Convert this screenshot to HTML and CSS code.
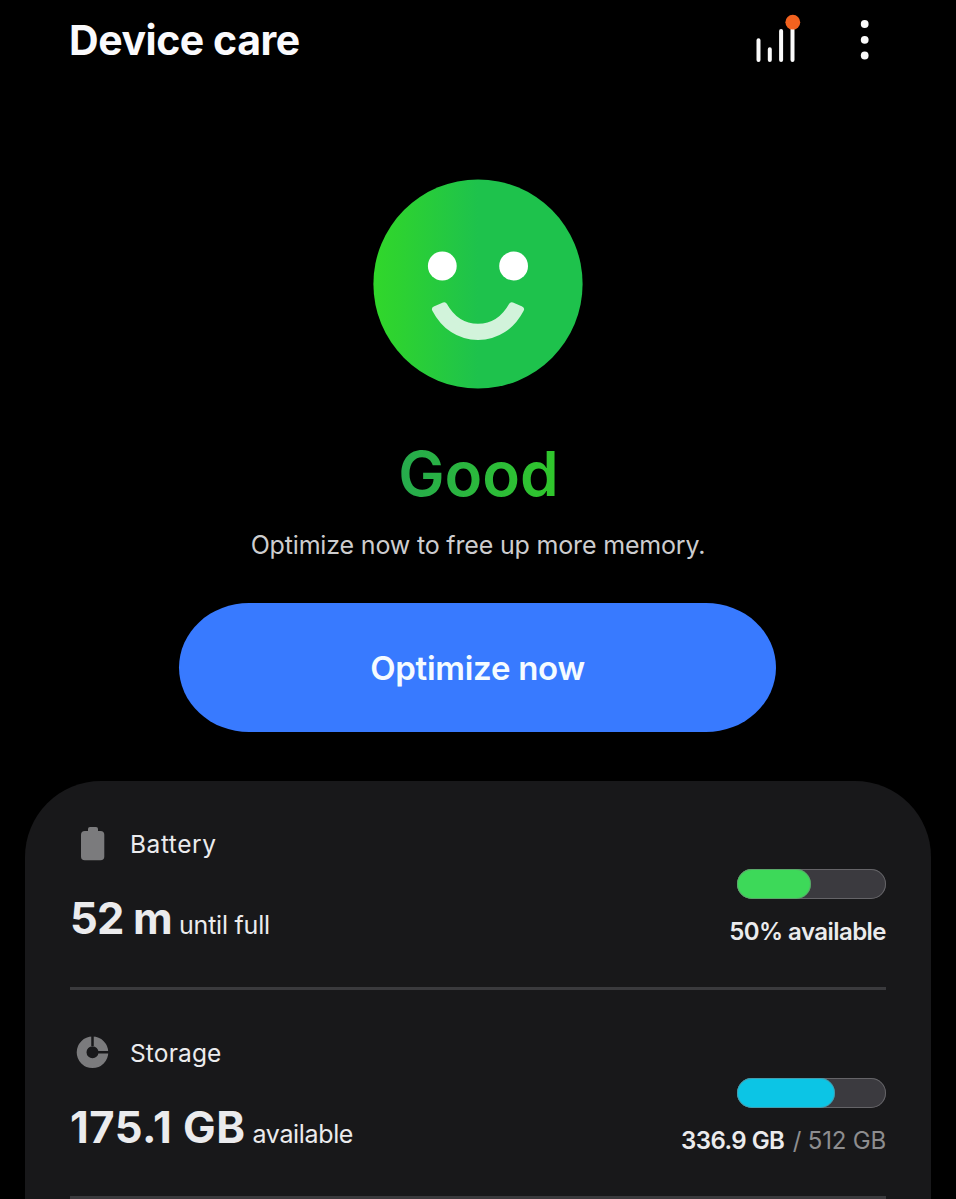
FILE: index.html
```html
<!DOCTYPE html>
<html lang="en">
<head>
<meta charset="utf-8">
<title>Device care</title>
<link rel="stylesheet" href="styles.css">
</head>
<body>
<header class="topbar">
  <h1 class="title"><span class="t-title">Device care</span></h1>
  <div class="actions">
    <svg class="icon-signal" width="52" height="56" viewBox="750 10 52 56" fill="none" stroke="#fafafa" stroke-width="4" stroke-linecap="round">
      <path d="M758.5 40.3V60M769.8 49.3V60M781.1 31V60M792.5 24V60"/>
      <circle cx="792.8" cy="22.2" r="7.4" fill="#f2621f" stroke="none"/>
    </svg>
    <svg class="icon-more" width="12" height="44" viewBox="859 18 12 44" fill="#fafafa">
      <circle cx="864.7" cy="24" r="3.9"/><circle cx="864.7" cy="39.8" r="3.9"/><circle cx="864.7" cy="55.5" r="3.9"/>
    </svg>
  </div>
</header>
<main>
  <section class="status">
    <svg class="face" width="210" height="210" viewBox="373 179 210 210">
      <defs><linearGradient id="face" x1="0" x2="1" y1="0" y2="0">
        <stop offset="0" stop-color="#31d72b"/><stop offset=".12" stop-color="#2dd231"/><stop offset=".5" stop-color="#1ec24c"/><stop offset="1" stop-color="#1ec24c"/>
      </linearGradient></defs>
      <circle cx="478" cy="284" r="104.6" fill="url(#face)"/>
      <circle cx="442.3" cy="266" r="14.4" fill="#fff"/>
      <circle cx="513.6" cy="266" r="14.4" fill="#fff"/>
      <path d="M435 309.3C444 326.500 459 337 478 337S512 326.500 521 309.300L511.800 305.300C504.500 318.500 493 326.800 478 326.800S451.500 318.500 444.200 305.300Z" fill="#d2f3db" stroke="#d2f3db" stroke-width="6" stroke-linejoin="round"/>
    </svg>
    <div class="grade"><span class="t-grade">Good</span></div>
    <p class="hint"><span class="t-hint">Optimize now to free up more memory.</span></p>
    <button class="optimize"><span class="t-button">Optimize now</span></button>
  </section>
  <section class="card">
    <article class="row">
      <div class="info">
        <div class="label">
          <svg width="44" height="40" viewBox="70 824 44 40" fill="#7b7b7d"><path d="M88 831V829Q88 827 90 827H96Q98 827 98 829V831H100.500Q104.300 831 104.300 834.800V856.500Q104.300 860.300 100.500 860.300H84.800Q81 860.300 81 856.500V834.800Q81 831 84.800 831Z"/></svg>
          <span class="t-battery">Battery</span>
        </div>
        <div class="value"><strong class="t-time">52 m</strong><span class="t-until">until full</span></div>
      </div>
      <div class="meter">
        <div class="track"><div class="fill green" style="width:50%"></div></div>
        <div class="caption"><b class="t-percent">50% available</b></div>
      </div>
    </article>
    <article class="row">
      <div class="info">
        <div class="label">
          <svg width="44" height="40" viewBox="70 1033 44 40"><circle cx="92.500" cy="1052.300" r="10.900" fill="none" stroke="#7b7b7d" stroke-width="9.800"/><path d="M92.500 1046V1035M98 1052.300H110" stroke="#18181a" stroke-width="2.500"/></svg>
          <span class="t-storage">Storage</span>
        </div>
        <div class="value"><strong class="t-size">175.1 GB</strong><span class="t-avail">available</span></div>
      </div>
      <div class="meter">
        <div class="track"><div class="fill cyan" style="width:65.8%"></div></div>
        <div class="caption"><b class="t-used">336.9 GB</b><span class="t-total">/ 512 GB</span></div>
      </div>
    </article>
  </section>
</main>
</body>
</html>
```
FILE: styles.css
```css
* { box-sizing: border-box; }
body {
  margin: 0;
  height: 1199px;
  overflow: hidden;
  background: #000;
  color: #ebebed;
  font-family: Inter, "Liberation Sans", sans-serif;
}
span, strong, b { white-space: nowrap; }
.topbar {
  display: flex;
  justify-content: space-between;
  height: 80px;
  padding: 0 85px 0 69px;
}
.title { margin: 0; font-size: 41px; font-weight: 700; line-height: 80px; letter-spacing: -.45px; color: #fafafc; }
.actions { display: flex; align-items: flex-start; gap: 57px; }
.icon-signal { margin-top: 10px; }
.icon-more { margin-top: 18px; }
.status { display: flex; flex-direction: column; align-items: center; padding-top: 99px; }
.face { display: block; }
.grade { height: 80px; margin: 45px 0 0 1px; line-height: 80px; font-size: 62px; font-weight: 600; }
.t-grade {
  display: inline-block;
  background: linear-gradient(90deg, #26aa4d, #30c72b);
  background-clip: text;
  -webkit-background-clip: text;
  color: transparent;
}
.hint { height: 40px; margin: 11px 0 0; line-height: 40px; font-size: 25px; letter-spacing: -.17px; color: #cdcdcf; }
.optimize {
  width: 597px;
  height: 129px;
  margin: 37.5px 1px 0 0;
  padding: 2px 0 0;
  border: 0;
  border-radius: 70px / 64.5px;
  background: #387aff;
  color: #f5fbff;
  font: 600 33px/127px Inter, sans-serif;
  letter-spacing: -.27px;
}
.card {
  height: 440px;
  margin: 49.5px 25px 0;
  padding: 0 45px;
  border-radius: 76px 76px 0 0;
  background: #18181a;
}
.row { display: flex; justify-content: space-between; height: 209px; border-bottom: 3px solid #3a3a3d; }
.info { padding-top: 43px; }
.label { display: flex; align-items: center; gap: 16px; height: 40px; font-size: 24.5px; }
.label svg { display: block; }
.t-battery { letter-spacing: .55px; }
.t-storage { letter-spacing: .15px; }
.value { display: flex; align-items: baseline; gap: 7px; height: 60px; margin-top: 24px; line-height: 60px; font-size: 25px; }
.value strong { font-size: 43.5px; font-weight: 700; }
.value .t-time { letter-spacing: -.8px; }
.value .t-size { letter-spacing: .5px; }
.t-until { letter-spacing: -.22px; }
.t-avail { letter-spacing: -.35px; }
.meter { display: flex; flex-direction: column; align-items: flex-end; padding-top: 88px; }
.track { width: 149.5px; height: 30px; border-radius: 15px; background: #3b3a3f; box-shadow: inset 0 0 0 1px #656468; }
.fill { height: 30px; border-radius: 15px; box-shadow: inset 0 0 0 1px rgba(120,120,124,.5); }
.green { background: #3dd959; }
.cyan { background: #0cc5e5; }
.caption { display: flex; gap: 8.5px; height: 30px; margin-top: 18px; line-height: 30px; font-size: 24px; }
.caption b { font-weight: 600; letter-spacing: -.55px; }
.t-total { letter-spacing: -.2px; color: #8d8d8f; }
```
